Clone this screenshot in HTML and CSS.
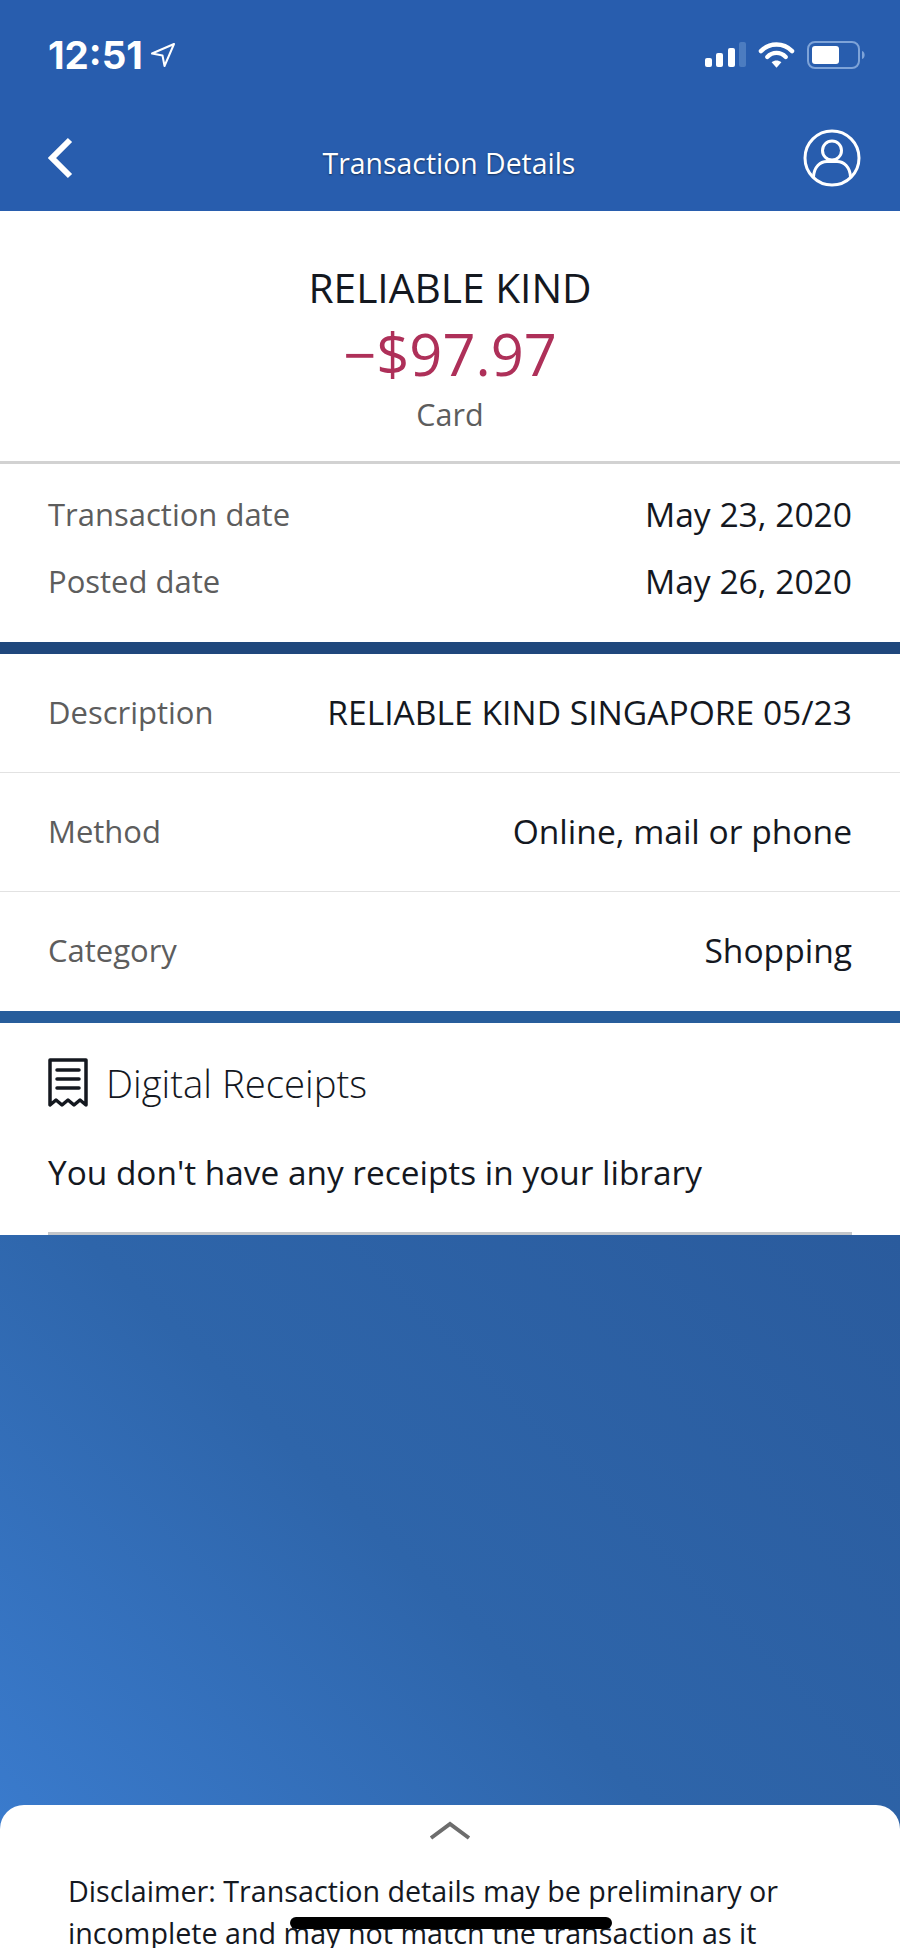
FILE: index.html
```html
<!DOCTYPE html>
<html lang="en">
<head>
  <meta charset="UTF-8" />
  <meta name="viewport" content="width=device-width, initial-scale=1.0"/>
  <title>Transaction Details</title>
  <link rel="stylesheet" href="styles.css">
</head>
<body>
  <div class="page">
    <header class="header">
      <div class="status">
        <div class="time">
          <span>12:51</span>
          <svg class="arrow" width="26" height="26" viewBox="0 0 26 26"><path d="M24 2 2 11.500 12.500 13.500 14.500 24Z" fill="none" stroke="#fff" stroke-width="2" stroke-linejoin="round"/></svg>
        </div>
        <div class="status-icons">
          <svg width="41" height="26" viewBox="0 0 41 26">
            <rect x="0" y="16" width="7" height="9" rx="2" fill="#fff"/>
            <rect x="11" y="11" width="7" height="14" rx="2" fill="#fff"/>
            <rect x="23" y="6" width="7" height="19" rx="2" fill="#fff"/>
            <rect x="34" y="0" width="7" height="25" rx="2" fill="#4c7cc0"/>
          </svg>
          <svg width="37" height="28" viewBox="0 0 38 28">
            <path d="M3 10C12 1 26 1 35 10" fill="none" stroke="#fff" stroke-width="4.500" stroke-linecap="round"/>
            <path d="M9.500 16C15 10.500 23 10.500 28.500 16" fill="none" stroke="#fff" stroke-width="4.500" stroke-linecap="round"/>
            <path d="M14 21.500C17 19 21 19 24 21.500L19 27Z" fill="#fff"/>
          </svg>
          <svg width="59" height="28" viewBox="0 0 59 28">
            <rect x="1" y="1" width="51" height="26" rx="7" fill="none" stroke="#7ea3d8" stroke-width="2"/>
            <rect x="5" y="5" width="27" height="18" rx="3" fill="#fff"/>
            <path d="M55 10C58.500 11 58.500 17 55 18Z" fill="#7ea3d8"/>
          </svg>
        </div>
      </div>
      <div class="nav">
        <svg class="back" width="28" height="42" viewBox="0 0 28 42"><path d="M22 3 4 21 22 39" fill="none" stroke="#fff" stroke-width="6"/></svg>
        <div class="nav-title">Transaction Details</div>
        <svg class="user" width="60" height="60" viewBox="0 0 60 60">
          <circle cx="30" cy="30" r="27" fill="none" stroke="#fff" stroke-width="3"/>
          <circle cx="30" cy="22.500" r="9.500" fill="none" stroke="#fff" stroke-width="3"/>
          <path d="M11.500 49C12 39 18 33.500 25 33.500H35C42 33.500 48 39 48.500 49" fill="none" stroke="#fff" stroke-width="3"/>
        </svg>
      </div>
    </header>

    <section class="summary">
      <div class="merchant">RELIABLE KIND</div>
      <div class="amount">−$97.97</div>
      <div class="source">Card</div>
    </section>

    <section class="dates">
      <div class="date-row"><span class="label">Transaction date</span><span class="value">May 23, 2020</span></div>
      <div class="date-row"><span class="label">Posted date</span><span class="value">May 26, 2020</span></div>
    </section>

    <div class="band band-dark"></div>

    <section class="details">
      <div class="detail-row"><span class="label">Description</span><span class="value">RELIABLE KIND SINGAPORE 05/23</span></div>
      <div class="detail-row"><span class="label">Method</span><span class="value">Online, mail or phone</span></div>
      <div class="detail-row"><span class="label">Category</span><span class="value">Shopping</span></div>
    </section>

    <div class="band band-mid"></div>

    <section class="receipts">
      <div class="receipts-title">
        <svg width="40" height="50" viewBox="0 0 40 50">
          <path d="M2 2H38V47L32 42 26 47 20 42 14 47 8 42 2 47Z" fill="none" stroke="#14181f" stroke-width="3.500" stroke-linejoin="round"/>
          <path d="M9 12H31M9 21H31M9 30H31" stroke="#14181f" stroke-width="3.500" stroke-linecap="round"/>
        </svg>
        <span>Digital Receipts</span>
      </div>
      <p class="receipts-empty">You don't have any receipts in your library</p>
      <div class="receipts-rule"></div>
    </section>

    <div class="backdrop"></div>

    <section class="drawer">
      <svg class="drawer-handle" width="42" height="20" viewBox="0 0 42 20"><path d="M2 17 21 3 40 17" fill="none" stroke="#6d6d6d" stroke-width="4"/></svg>
      <p class="disclaimer">Disclaimer: Transaction details may be preliminary or incomplete and may not match the transaction as it appears on your statement.</p>
    </section>

    <div class="home-bar"></div>
  </div>
</body>
</html>
```

FILE: styles.css
```css
* {
  box-sizing: border-box;
}
html, body {
  margin: 0;
  padding: 0;
}
body {
  font-family: "Open Sans", sans-serif;
  color: #14181f;
  background: #fff;
}
.page {
  position: relative;
  width: 900px;
  height: 1948px;
  overflow: hidden;
  display: flex;
  flex-direction: column;
}
.header {
  height: 211px;
  flex: none;
  background: #285dae;
  color: #fff;
  padding: 0 34px 0 48px;
}
.status {
  display: flex;
  justify-content: space-between;
  align-items: center;
  height: 110px;
}
.time {
  display: flex;
  align-items: center;
  gap: 7px;
  font-family: Inter, sans-serif;
  font-weight: 700;
  font-size: 38.500px;
}
.status-icons {
  display: flex;
  align-items: center;
  gap: 12px;
}
.nav {
  display: grid;
  grid-template-columns: 1fr auto 1fr;
  align-items: center;
  height: 66px;
  margin-top: 15px;
  padding-right: 4px;
}
.nav-title {
  font-size: 28.400px;
  text-shadow: 0 1px 2px rgba(0, 0, 0, 0.5);
  margin: 9px 0 0 -12px;
}
.user {
  justify-self: end;
}
.summary {
  height: 253px;
  flex: none;
  border-bottom: 3px solid #d2d2d2;
  text-align: center;
  padding-top: 49px;
}
.merchant {
  font-size: 40.700px;
  line-height: 54px;
}
.amount {
  font-size: 57.800px;
  line-height: 80px;
  color: #ae3059;
}
.source {
  font-size: 30.500px;
  line-height: 40px;
  color: #5d5d5d;
}
.dates {
  height: 178px;
  flex: none;
  padding: 16px 48px 0;
}
.date-row {
  display: flex;
  justify-content: space-between;
  align-items: center;
  height: 67px;
}
.label {
  font-size: 31px;
  color: #5d5d5d;
}
.value {
  font-size: 33.600px;
}
.band {
  height: 12px;
  flex: none;
}
.band-dark {
  background: #1f477c;
}
.band-mid {
  background: #275d9b;
}
.details {
  flex: none;
}
.detail-row {
  display: flex;
  justify-content: space-between;
  align-items: center;
  height: 119px;
  padding: 0 48px 3px;
  border-bottom: 1px solid #e2e2e2;
}
.detail-row:last-child {
  border-bottom: none;
}
.receipts {
  height: 212px;
  flex: none;
  padding: 34px 48px 0;
  display: flex;
  flex-direction: column;
}
.receipts-title {
  display: flex;
  align-items: center;
  gap: 18px;
  font-size: 38.300px;
  font-weight: 300;
}
.receipts-empty {
  margin: 40px 0 0;
  font-size: 33.400px;
}
.receipts-rule {
  margin-top: auto;
  height: 3px;
  background: #c3c6ca;
}
.backdrop {
  flex: 1;
  background: linear-gradient(225deg, #2a5b9d 0%, #2e65aa 55%, #3a7bcd 100%);
}
.drawer {
  height: 143px;
  flex: none;
  margin-top: -24px;
  background: #fff;
  border-radius: 24px 24px 0 0;
  padding: 16px 68px 0;
}
.drawer-handle {
  display: block;
  margin: 0 auto;
}
.disclaimer {
  margin: 29px 0 0;
  font-size: 28.700px;
  line-height: 42px;
  width: 770px;
}
.home-bar {
  position: absolute;
  left: 290px;
  top: 1917px;
  width: 322px;
  height: 12px;
  border-radius: 6px;
  background: #000;
}
```
